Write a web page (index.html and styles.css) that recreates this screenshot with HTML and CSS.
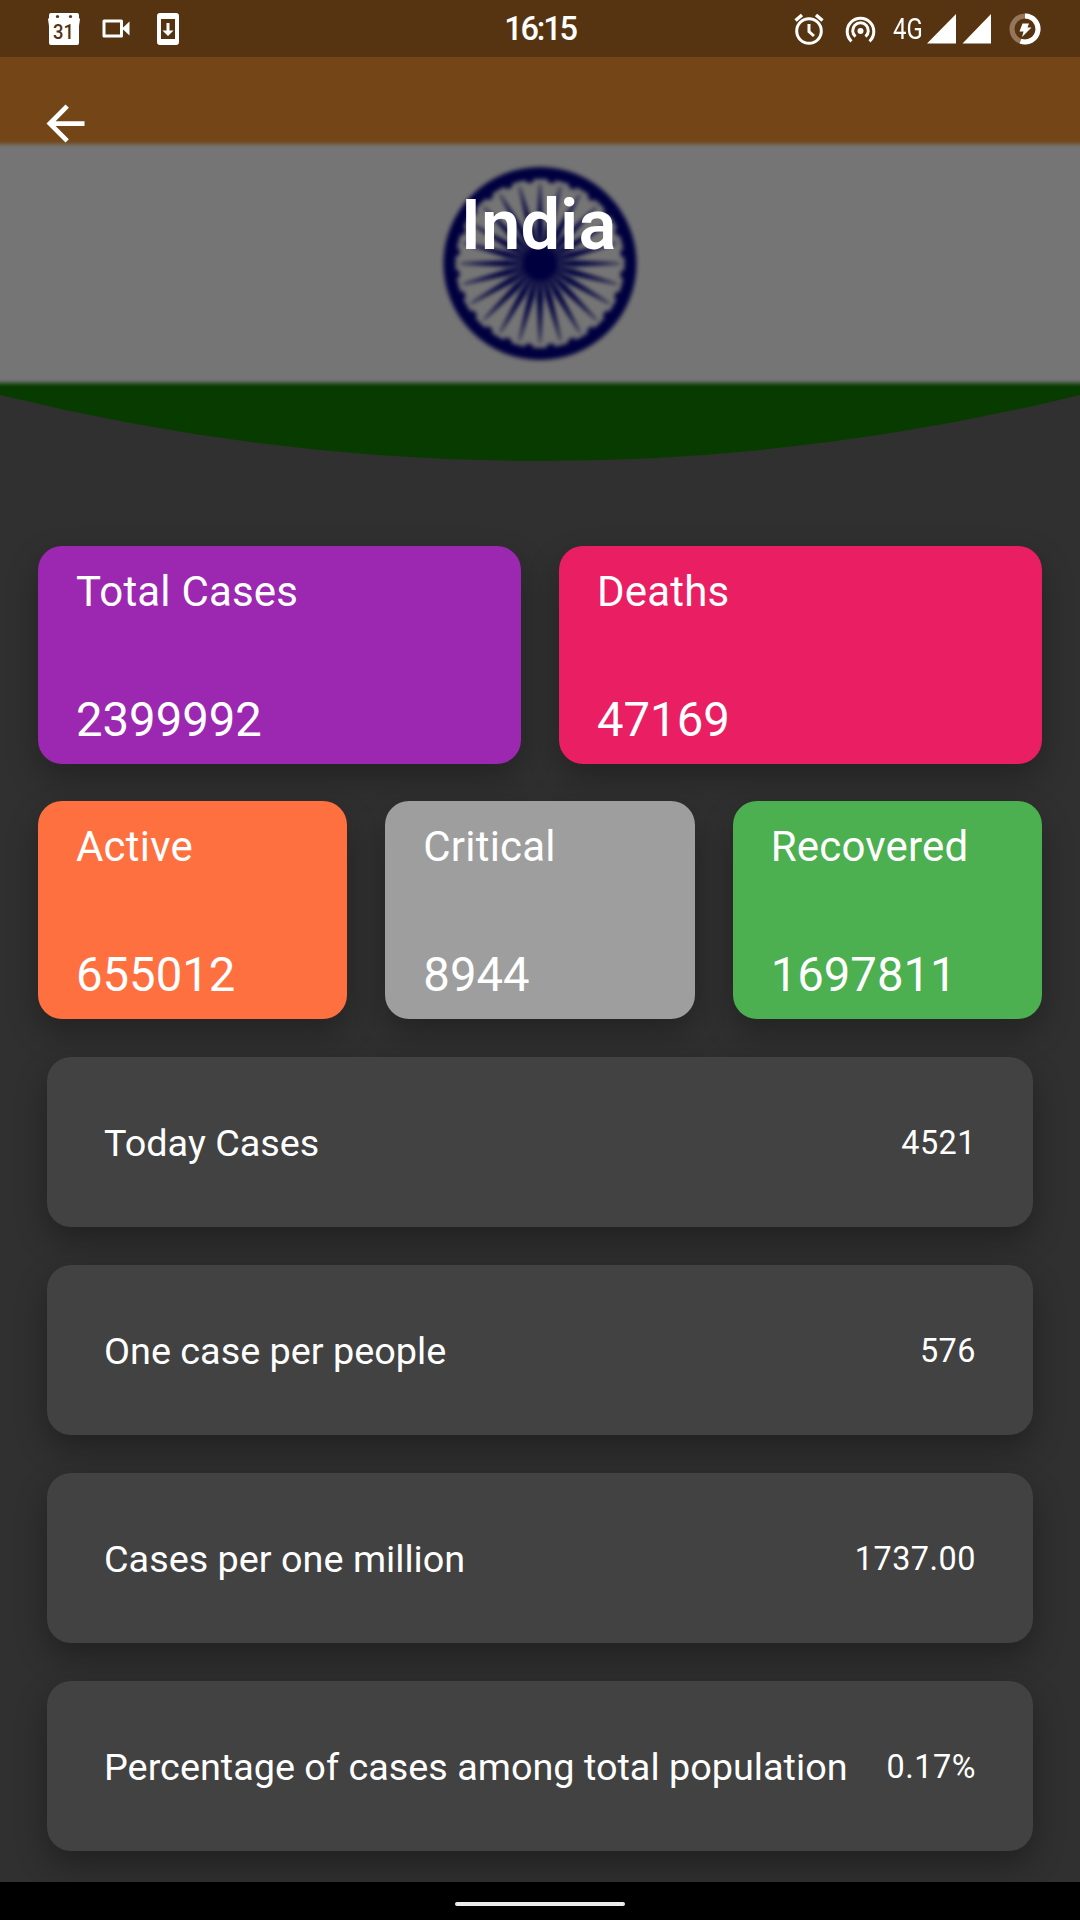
FILE: index.html
```html
<!DOCTYPE html>
<html lang="en">
<head>
<meta charset="utf-8">
<title>India</title>
<link rel="stylesheet" href="styles.css">
</head>
<body>
<div class="screen">
  <header class="hero">
    <svg class="flag" viewBox="0 0 1080 462" aria-hidden="true">
      <defs>
        <clipPath id="curve"><path d="M0 0H1080V395Q540 527 0 395Z"/></clipPath>
        <filter id="soft" x="-5%" y="-5%" width="110%" height="110%" color-interpolation-filters="sRGB"><feGaussianBlur stdDeviation="1.9"/></filter>
        <g id="spokes">
          <path id="spoke" d="M-1.600 -14L-3.200 -34L-0.500 -80H0.500L3.200 -34L1.600 -14Z"/>
          <use href="#spoke" transform="rotate(15)"/>
          <use href="#spoke" transform="rotate(30)"/>
          <use href="#spoke" transform="rotate(45)"/>
          <use href="#spoke" transform="rotate(60)"/>
          <use href="#spoke" transform="rotate(75)"/>
        </g>
      </defs>
      <g clip-path="url(#curve)">
        <g filter="url(#soft)">
          <rect x="-20" y="-20" width="1120" height="164" fill="#734517"/>
          <rect x="-20" y="144" width="1120" height="239" fill="#757575"/>
          <rect x="-20" y="383" width="1120" height="110" fill="#083b00"/>
          <g transform="translate(540 263.5)" fill="#00003f">
            <circle r="90.500" fill="none" stroke="#00003f" stroke-width="12"/>
            <circle r="83.500" fill="none" stroke="#00003f" stroke-width="4.500" stroke-dasharray="7 14.860" stroke-dashoffset="-7.400"/>
            <circle r="17"/>
            <use href="#spokes"/>
            <use href="#spokes" transform="rotate(90)"/>
            <use href="#spokes" transform="rotate(180)"/>
            <use href="#spokes" transform="rotate(270)"/>
          </g>
        </g>
      </g>
    </svg>
    <div class="status">
      <div class="status-left">
        <svg width="32" height="34" viewBox="0 0 32 34"><path fill="#fff" d="M3 1H29Q31 1 31 3V6L32 7L31 14V31Q31 33 29 33H3Q1 33 1 31V14L0 7L1 6V3Q1 1 3 1Z"/><circle cx="9.500" cy="4.500" r="1.600" fill="#57310f"/><circle cx="22.500" cy="4.500" r="1.600" fill="#57310f"/><text class="day" x="15.500" y="26.500" text-anchor="middle" textLength="21" lengthAdjust="spacingAndGlyphs">31</text></svg>
        <svg class="video" width="28" height="20" viewBox="0 0 28 20"><path fill="none" stroke="#fff" stroke-width="3" stroke-linejoin="round" d="M2 2H19.500V17H2Z"/><path fill="#fff" d="M20 9.500L27.500 2.500V16.500Z"/></svg>
        <svg class="update" width="22" height="34" viewBox="0 0 22 34"><path fill="#fff" fill-rule="evenodd" d="M3 1H19Q22 1 22 4V30Q22 33 19 33H3Q0 33 0 30V4Q0 1 3 1ZM4 7V27H18V7ZM9.500 11H12.500V18.500H16.500L11 24L5.500 18.500H9.500Z"/></svg>
      </div>
      <div class="time">16:15</div>
      <div class="status-right">
        <svg width="30" height="32" viewBox="0 0 30 32" fill="none" stroke="#fff" stroke-width="3"><circle cx="15" cy="18" r="12.300"/><path d="M15 11V18.500L20 23"/><path stroke-width="3.500" d="M1.500 7.500L8 2M28.500 7.500L22 2"/></svg>
        <svg class="hotspot" width="31" height="28" viewBox="0 0 31 28" fill="none" stroke="#fff" stroke-width="3"><circle cx="15.500" cy="16" r="3" fill="#fff" stroke="none"/><path d="M6.500 26.300A13.300 13.300 0 1 1 24.500 26.300"/><path d="M10.500 21.600A7.800 7.800 0 1 1 20.500 21.600"/></svg>
        <span class="network">4G</span>
        <svg class="signal" width="64" height="30" viewBox="0 0 64 30"><path fill="#fff" d="M0 29.500L29 0V29.500ZM35.500 29.500L64 0V29.500Z"/></svg>
        <svg class="battery" width="32" height="32" viewBox="0 0 32 32"><circle cx="16" cy="16" r="13" fill="none" stroke="#96765b" stroke-width="5"/><path fill="none" stroke="#fff" stroke-width="5" d="M16 3A13 13 0 1 1 11.500 28.200"/><path fill="#fff" d="M13.500 10.500H20L18.500 14.500H22.500L13 24L14.500 18.500H10.500Z"/></svg>
      </div>
    </div>
    <svg class="back" viewBox="0 0 24 24"><path fill="#fff" d="M20 11H7.830l5.590-5.590L12 4l-8 8 8 8 1.410-1.410L7.830 13H20v-2z"/></svg>
    <h1 class="title">India</h1>
  </header>

  <main class="content">
    <section class="stats">
      <article class="stat purple"><span class="label">Total Cases</span><span class="number">2399992</span></article>
      <article class="stat pink"><span class="label">Deaths</span><span class="number">47169</span></article>
    </section>
    <section class="stats">
      <article class="stat orange"><span class="label">Active</span><span class="number">655012</span></article>
      <article class="stat grey"><span class="label">Critical</span><span class="number">8944</span></article>
      <article class="stat green"><span class="label">Recovered</span><span class="number">1697811</span></article>
    </section>
    <section class="rows">
      <div class="row"><span>Today Cases</span><span class="value">4521</span></div>
      <div class="row"><span>One case per people</span><span class="value">576</span></div>
      <div class="row"><span>Cases per one million</span><span class="value">1737.00</span></div>
      <div class="row"><span>Percentage of cases among total population</span><span class="value">0.17%</span></div>
    </section>
  </main>
  <nav class="navbar"><div class="handle"></div></nav>
</div>
</body>
</html>
```
FILE: styles.css
```css
* { box-sizing: border-box; }
body {
  margin: 0;
  background: #303030;
  color: #fff;
  font-family: Roboto, "Liberation Sans", sans-serif;
}
.screen {
  width: 1080px;
  height: 1920px;
  display: flex;
  flex-direction: column;
  overflow: hidden;
}
.hero {
  position: relative;
  height: 462px;
  flex: none;
}
.flag {
  position: absolute;
  inset: 0;
  width: 1080px;
  height: 462px;
}
.status {
  position: relative;
  height: 57px;
  padding: 0 39px;
  background: rgba(0, 0, 0, 0.24);
  display: grid;
  grid-template-columns: 1fr auto 1fr;
  align-items: center;
}
.status svg { display: block; }
.status-left, .status-right { display: flex; align-items: center; }
.status-left { padding-left: 9px; }
.status-right { justify-content: flex-end; }
.video { margin-left: 22px; }
.update { margin-left: 27px; }
.day { font-size: 20px; font-weight: 500; fill: #57310f; }
.time {
  font-size: 32.5px;
  font-weight: 500;
  letter-spacing: -2.2px;
}
.hotspot { margin-left: 21px; }
.network {
  width: 37px;
  margin: 0 -3px 0 17px;
  font-size: 29.5px;
  line-height: 40px;
  transform: scaleX(0.81);
  transform-origin: left center;
}
.battery { margin-left: 18px; }
.back {
  position: relative;
  display: block;
  width: 57px;
  height: 57px;
  margin: 38px 0 0 37px;
}
.title {
  position: relative;
  margin: 32px 3px 0 0;
  line-height: 82px;
  font-size: 70.5px;
  font-weight: 600;
  text-align: center;
}
.content {
  flex: 1;
  min-height: 0;
  overflow: hidden;
  padding: 84px 38px 0;
}
.stats {
  display: flex;
  gap: 38px;
  margin-bottom: 37.5px;
}
.stat {
  flex: 1 1 0;
  min-width: 0;
  height: 217.5px;
  padding: 20.5px 38px 15.5px;
  border-radius: 24px;
  display: flex;
  flex-direction: column;
  justify-content: space-between;
  box-shadow: 0 14px 32px rgba(0, 0, 0, 0.28);
}
.label { font-size: 42px; line-height: 50px; letter-spacing: 0.2px; }
.number { font-size: 47.25px; line-height: 56px; }
.purple { background: #9c27b0; }
.pink { background: #e91e63; }
.orange { background: #ff7040; }
.grey { background: #9e9e9e; }
.green { background: #4caf50; }
.rows {
  display: flex;
  flex-direction: column;
  gap: 38px;
  margin: 38.5px 9px 0;
}
.row {
  flex: none;
  height: 170px;
  padding: 1px 57px 0;
  border-radius: 24px;
  background: #424242;
  display: flex;
  align-items: center;
  justify-content: space-between;
  font-size: 37.8px;
  white-space: nowrap;
  box-shadow: 0 14px 32px rgba(0, 0, 0, 0.32);
}
.value {
  padding-top: 1px;
  font-size: 32.4px;
  letter-spacing: 0.5px;
}
.navbar {
  flex: none;
  height: 38px;
  background: #000;
  display: flex;
  align-items: center;
  justify-content: center;
}
.handle {
  width: 170px;
  height: 4px;
  margin-top: 6px;
  border-radius: 2px;
  background: #ececec;
}
```
